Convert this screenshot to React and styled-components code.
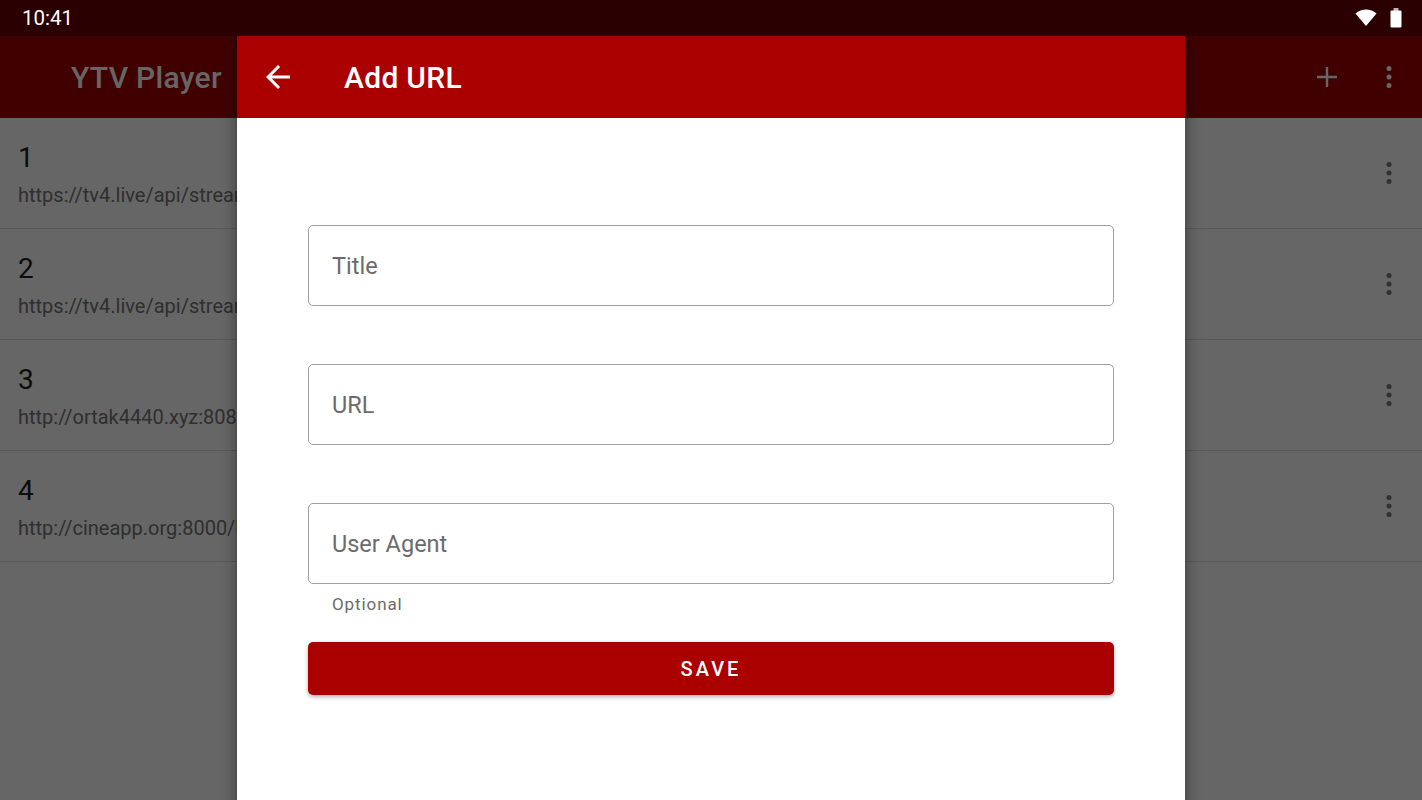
import React from "react";
import styled, { createGlobalStyle } from "styled-components";

const Global = createGlobalStyle`
  html, body { margin: 0; padding: 0; }
  body { font-family: Roboto, "Noto Sans", "Liberation Sans", sans-serif; background: #fff; }
  * { box-sizing: border-box; }
`;

const Screen = styled.div`
  position: relative;
  width: 1422px;
  height: 800px;
  overflow: hidden;
  display: flex;
  flex-direction: column;
  background: #fff;
`;

const StatusBar = styled.div`
  height: 36px;
  flex: none;
  background: #2b0000;
  display: flex;
  align-items: center;
  justify-content: space-between;
  padding: 0 20px 0 22px;
  color: #fff;
  font-size: 20.5px;
  position: relative;
  z-index: 3;
`;

const StatusIcons = styled.div`
  display: flex;
  align-items: center;
  gap: 13px;
`;

const Main = styled.div`
  position: relative;
  flex: 1;
  display: flex;
  flex-direction: column;
`;

const AppBar = styled.div`
  height: 82px;
  flex: none;
  background: #a00000;
  display: flex;
  align-items: center;
  padding: 0 2px 0 71px;
  color: #fff;
`;

const AppTitle = styled.div`
  font-size: 30px;
  font-weight: 500;
  letter-spacing: 0.3px;
  flex: 1;
`;

const IconButton = styled.div`
  width: 62px;
  height: 48px;
  flex: none;
  display: flex;
  align-items: center;
  justify-content: center;
`;

const List = styled.div`
  display: flex;
  flex-direction: column;
`;

const Row = styled.div`
  height: 111px;
  display: flex;
  align-items: center;
  padding: 0 2px 0 18px;
  border-bottom: 1px solid #dcdcdc;
`;

const RowText = styled.div`
  flex: 1;
  align-self: flex-start;
  padding-top: 23px;
  display: flex;
  flex-direction: column;
  gap: 6px;
  white-space: nowrap;
  overflow: hidden;
`;

const RowTitle = styled.div`
  font-size: 28px;
  line-height: 34px;
  color: #212121;
`;

const RowUrl = styled.div`
  font-size: 20px;
  line-height: 28px;
  color: #757575;
`;

const Scrim = styled.div`
  position: absolute;
  inset: 0;
  background: rgba(0, 0, 0, 0.6);
`;

const Dialog = styled.div`
  position: absolute;
  left: 237px;
  top: 0;
  width: 948px;
  height: 800px;
  background: #fff;
  display: flex;
  flex-direction: column;
  box-shadow: 0 0 14px rgba(0, 0, 0, 0.45);
`;

const DialogHeader = styled.div`
  height: 82px;
  flex: none;
  background: #aa0000;
  display: flex;
  align-items: center;
  padding-left: 23px;
  gap: 48px;
  color: #fff;
`;

const DialogTitle = styled.div`
  font-size: 30px;
  font-weight: 500;
  letter-spacing: 0.3px;
`;

const Form = styled.div`
  width: 806px;
  align-self: center;
  padding-top: 107px;
  display: flex;
  flex-direction: column;
`;

const Field = styled.div`
  height: 81px;
  border: 1.5px solid #a0a0a0;
  border-radius: 5px;
  display: flex;
  align-items: center;
  padding-left: 23px;
  font-size: 23.5px;
  color: #6b6b6b;
  margin-bottom: ${(p) => p.$mb || 0}px;
`;

const Helper = styled.div`
  font-size: 17px;
  letter-spacing: 0.9px;
  color: #6b6b6b;
  padding: 10px 0 0 24px;
  height: 58px;
`;

const SaveButton = styled.div`
  height: 53px;
  border-radius: 5px;
  background: #aa0000;
  color: #fff;
  font-size: 20px;
  font-weight: 500;
  letter-spacing: 3px;
  display: flex;
  align-items: center;
  justify-content: center;
  box-shadow: 0 2px 4px rgba(0, 0, 0, 0.3);
`;

const Wifi = () => (
  <svg width="22" height="18" viewBox="0 0 22 18">
    <path d="M11 17 L0.5 4.5 C6.5 -0.7 15.5 -0.7 21.5 4.5 Z" fill="#fff" />
  </svg>
);

const Battery = () => (
  <svg width="12" height="20" viewBox="0 0 12 20">
    <rect x="3.5" y="0" width="5" height="3" fill="#fff" opacity="0.7" />
    <rect x="0.5" y="2.5" width="11" height="17" rx="1" fill="#fff" />
  </svg>
);

const Dots = ({ color }) => (
  <svg width="28" height="28" viewBox="0 0 28 28">
    <circle cx="14" cy="5.5" r="2.5" fill={color} />
    <circle cx="14" cy="14" r="2.5" fill={color} />
    <circle cx="14" cy="22.5" r="2.5" fill={color} />
  </svg>
);

const Plus = () => (
  <svg width="22" height="22" viewBox="0 0 22 22">
    <path d="M11 1v20M1 11h20" stroke="#fff" strokeWidth="2.4" />
  </svg>
);

const BackArrow = () => (
  <svg width="36" height="36" viewBox="0 0 24 24">
    <path d="M20 11H7.83l5.59-5.59L12 4l-8 8 8 8 1.41-1.41L7.83 13H20v-2z" fill="#fff" />
  </svg>
);

const rows = [
  { n: "1", url: "https://tv4.live/api/stream/playlist.m3u8" },
  { n: "2", url: "https://tv4.live/api/stream/playlist2.m3u8" },
  { n: "3", url: "http://ortak4440.xyz:8080/get.php" },
  { n: "4", url: "http://cineapp.org:8000/live/list.m3u" },
];

export default function App() {
  return (
    <Screen>
      <Global />
      <StatusBar>
        <span>10:41</span>
        <StatusIcons>
          <Wifi />
          <Battery />
        </StatusIcons>
      </StatusBar>
      <Main>
        <AppBar>
          <AppTitle>YTV Player</AppTitle>
          <IconButton>
            <Plus />
          </IconButton>
          <IconButton>
            <Dots color="#fff" />
          </IconButton>
        </AppBar>
        <List>
          {rows.map((r) => (
            <Row key={r.n}>
              <RowText>
                <RowTitle>{r.n}</RowTitle>
                <RowUrl>{r.url}</RowUrl>
              </RowText>
              <IconButton>
                <Dots color="#7a7a7a" />
              </IconButton>
            </Row>
          ))}
        </List>
        <Scrim />
        <Dialog>
          <DialogHeader>
            <BackArrow />
            <DialogTitle>Add URL</DialogTitle>
          </DialogHeader>
          <Form>
            <Field $mb={58}>Title</Field>
            <Field $mb={58}>URL</Field>
            <Field>User Agent</Field>
            <Helper>Optional</Helper>
            <SaveButton>SAVE</SaveButton>
          </Form>
        </Dialog>
      </Main>
    </Screen>
  );
}
